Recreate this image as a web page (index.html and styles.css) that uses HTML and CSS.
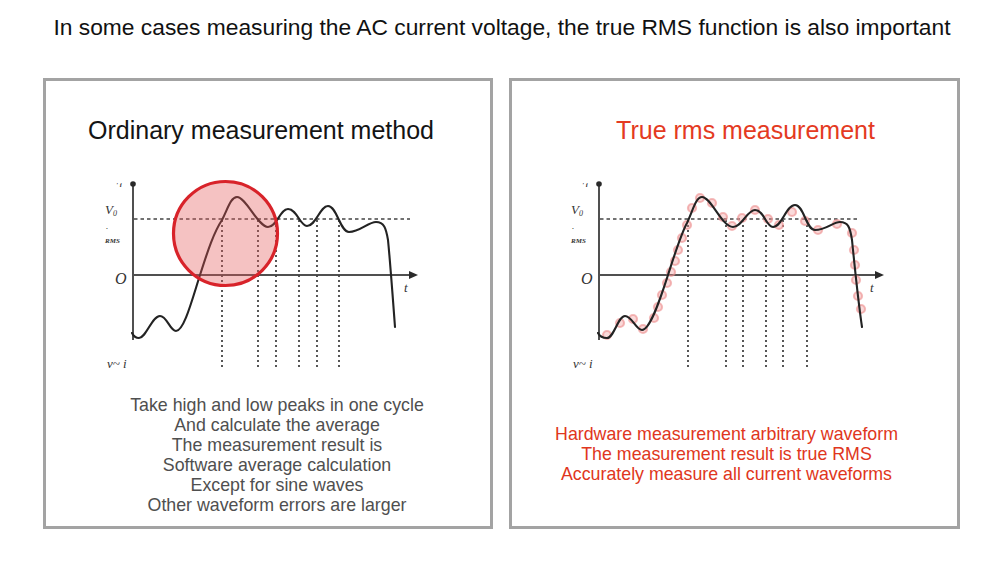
FILE: index.html
```html
<!DOCTYPE html>
<html lang="en">
<head>
<meta charset="utf-8">
<title>True RMS comparison</title>
<link rel="stylesheet" href="styles.css">
</head>
<body>
<h1 class="title">In some cases measuring the AC current voltage, the true RMS function is also important</h1>
<div class="panels">
  <section class="panel panel--ordinary">
    <h2 class="panel-heading">Ordinary measurement method</h2>
    <svg class="chart" viewBox="46 175 444 195" width="444" height="195">
      <line class="axis" x1="133" y1="184" x2="133" y2="340"/>
      <circle cx="133" cy="184" r="2.8" class="dot-black"/>
      <line class="axis" x1="133" y1="275" x2="411" y2="275"/>
      <polygon class="arrow" points="409,271 418,275 409,279"/>
      <line class="dash" x1="134" y1="219" x2="410" y2="219"/>
      <g class="dots-v">
        <line x1="222" y1="220" x2="222" y2="368"/>
        <line x1="258" y1="220" x2="258" y2="368"/>
        <line x1="276" y1="220" x2="276" y2="368"/>
        <line x1="299" y1="220" x2="299" y2="368"/>
        <line x1="317" y1="220" x2="317" y2="368"/>
        <line x1="339" y1="220" x2="339" y2="368"/>
      </g>
      <path class="wave" d="M132,333 C134,337 136,338 139,338 C146,338 152,316 160,316 C167,316 170,331 176,331 C184,331 192,300 200,275 C208,250 214,232 222,220 C228,208 231,197 237,197 C246,197 258,227 268,227 C277,227 280,209 288,209 C297,209 300,226 307,226 C316,226 320,206 328,206 C337,206 340,232 349,232 C360,232 368,222 376,222 C384,222 386,228 388,240 C390,260 393,300 395,327"/>
      <circle class="focus" cx="225.5" cy="233.5" r="52"/>
      <text class="lbl lbl-s" x="116" y="187">' i</text>
      <text class="lbl lbl-v" x="105" y="214">V<tspan class="sub" dy="2">0</tspan></text>
      <text class="lbl lbl-s" x="106" y="231">·</text>
      <text class="lbl lbl-s" x="105" y="243">RMS</text>
      <text class="lbl lbl-o" x="115" y="284">O</text>
      <text class="lbl lbl-v" x="404" y="292">t</text>
      <text class="lbl lbl-v" x="107" y="368">v~ i</text>
    </svg>
    <p class="notes">Take high and low peaks in one cycle<br>And calculate the average<br>The measurement result is<br>Software average calculation<br>Except for sine waves<br>Other waveform errors are larger</p>
  </section>
  <section class="panel panel--rms">
    <h2 class="panel-heading">True rms measurement</h2>
    <svg class="chart" viewBox="46 175 445 195" width="445" height="195">
      <line class="axis" x1="133" y1="184" x2="133" y2="340"/>
      <circle cx="133" cy="184" r="2.8" class="dot-black"/>
      <line class="axis" x1="133" y1="275" x2="411" y2="275"/>
      <polygon class="arrow" points="409,271 418,275 409,279"/>
      <line class="dash" x1="134" y1="219" x2="391" y2="219"/>
      <g class="dots-v">
        <line x1="222" y1="220" x2="222" y2="368"/>
        <line x1="260" y1="220" x2="260" y2="368"/>
        <line x1="277" y1="220" x2="277" y2="368"/>
        <line x1="300" y1="220" x2="300" y2="368"/>
        <line x1="317" y1="220" x2="317" y2="368"/>
        <line x1="341" y1="220" x2="341" y2="368"/>
      </g>
      <g class="samples">
        <circle cx="141" cy="335" r="4"/>
        <circle cx="154" cy="323" r="4"/>
        <circle cx="167" cy="319" r="4"/>
        <circle cx="177" cy="329" r="4"/>
        <circle cx="188" cy="318" r="4"/>
        <circle cx="192" cy="307" r="4"/>
        <circle cx="196" cy="295" r="4"/>
        <circle cx="201" cy="283" r="4"/>
        <circle cx="205" cy="272" r="4"/>
        <circle cx="209" cy="261" r="4"/>
        <circle cx="212" cy="250" r="4"/>
        <circle cx="216" cy="238" r="4"/>
        <circle cx="221" cy="225" r="4"/>
        <circle cx="226" cy="208" r="4"/>
        <circle cx="234" cy="198" r="4"/>
        <circle cx="246" cy="203" r="4"/>
        <circle cx="257" cy="217" r="4"/>
        <circle cx="266" cy="226" r="4"/>
        <circle cx="276" cy="218" r="4"/>
        <circle cx="289" cy="210" r="4"/>
        <circle cx="302" cy="219" r="4"/>
        <circle cx="313" cy="225" r="4"/>
        <circle cx="326" cy="212" r="4"/>
        <circle cx="339" cy="221" r="4"/>
        <circle cx="352" cy="230" r="4"/>
        <circle cx="371" cy="224" r="4"/>
        <circle cx="386" cy="233" r="4"/>
        <circle cx="388" cy="250" r="4"/>
        <circle cx="389" cy="265" r="4"/>
        <circle cx="390" cy="280" r="4"/>
        <circle cx="392" cy="296" r="4"/>
        <circle cx="395" cy="309" r="4"/>
      </g>
      <path class="wave" d="M132,333 C134,337 137,338 141,338 C148,338 152,316 159,316 C166,316 170,330 176,330 C184,330 194,300 202,275 C210,250 215,234 221,223 C227,210 230,197 236,197 C245,197 256,227 267,227 C276,227 281,210 289,210 C298,210 300,227 307,227 C316,227 320,205 329,205 C338,205 340,230 349,230 C360,230 367,222 374,222 C382,222 384,227 386,240 C388,260 392,300 396,327"/>
      <text class="lbl lbl-s" x="116" y="187">' i</text>
      <text class="lbl lbl-v" x="105" y="214">V<tspan class="sub" dy="2">0</tspan></text>
      <text class="lbl lbl-s" x="106" y="231">·</text>
      <text class="lbl lbl-s" x="105" y="243">RMS</text>
      <text class="lbl lbl-o" x="115" y="284">O</text>
      <text class="lbl lbl-v" x="404" y="292">t</text>
      <text class="lbl lbl-v" x="107" y="368">v~ i</text>
    </svg>
    <p class="notes">Hardware measurement arbitrary waveform<br>The measurement result is true RMS<br>Accurately measure all current waveforms</p>
  </section>
</div>
</body>
</html>
```
FILE: styles.css
```css
body {
  margin: 0;
  width: 1000px;
  height: 575px;
  overflow: hidden;
  background: #fff;
  font-family: "Liberation Sans", Arial, sans-serif;
  color: #111;
}

.title {
  margin: 0;
  padding: 14px 0 0 4px;
  font-size: 22.8px;
  line-height: 26px;
  font-weight: normal;
  text-align: center;
  color: #111;
}

.panels {
  display: flex;
  gap: 16px;
  margin-top: 38px;
  padding-left: 43px;
}

.panel {
  box-sizing: border-box;
  width: 450px;
  height: 451px;
  border: 3px solid #a3a3a3;
  display: flex;
  flex-direction: column;
}

.panel--rms {
  width: 451px;
}

.panel-heading {
  margin: 34px 0 0;
  font-size: 25px;
  line-height: 30px;
  font-weight: normal;
  text-align: center;
  color: #141414;
}

.panel--ordinary .panel-heading {
  padding-right: 14px;
}

.panel--rms .panel-heading {
  padding-left: 22px;
  color: #e43a22;
}

.chart {
  display: block;
  margin-top: 30px;
}

.notes {
  margin: 25px 0 0;
  padding-left: 18px;
  font-size: 17.8px;
  line-height: 20px;
  text-align: center;
  color: #4f4f4f;
}

.panel--rms .notes {
  margin-top: 54px;
  padding-left: 0;
  padding-right: 16px;
  color: #e03620;
}

/* chart drawing */
.axis {
  stroke: #505050;
  stroke-width: 2;
}

.arrow,
.dot-black {
  fill: #2a2a2a;
}

.dash {
  stroke: #444;
  stroke-width: 1.7;
  stroke-dasharray: 3.5 3;
}

.dots-v line {
  stroke: #444;
  stroke-width: 1.8;
  stroke-dasharray: 2 3;
}

.wave {
  fill: none;
  stroke: #232323;
  stroke-width: 2.1;
  stroke-linejoin: round;
  stroke-linecap: round;
}

.focus {
  fill: rgba(226, 86, 86, 0.36);
  stroke: #d8232a;
  stroke-width: 3.2;
}

.samples circle {
  fill: rgba(240, 150, 150, 0.35);
  stroke: rgba(236, 140, 140, 0.6);
  stroke-width: 2.2;
}

.lbl {
  font-family: "Liberation Serif", "Times New Roman", serif;
  font-style: italic;
  font-size: 11px;
  fill: #333;
}

.lbl-v {
  font-size: 13px;
}

.lbl-s {
  font-size: 7px;
  font-weight: bold;
}

.lbl-o {
  font-size: 16px;
}

.sub {
  font-size: 8px;
}
```
